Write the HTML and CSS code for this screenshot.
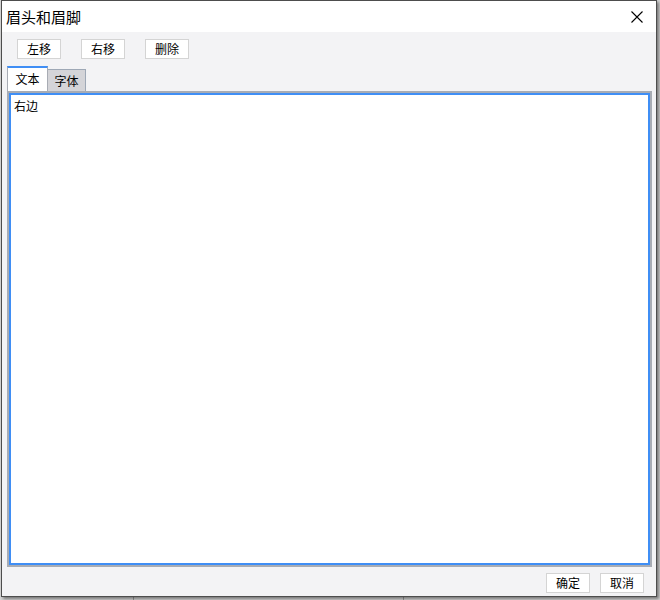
FILE: index.html
```html
<!DOCTYPE html>
<html lang="zh-CN">

<head>
    <meta charset="UTF-8">
    <meta name="viewport" content="width=device-width, initial-scale=1.0">
    <title>眉头和眉脚</title>
    <link rel="stylesheet" href="styles.css">
</head>

<body>
    <div class="dialog">
        <div class="title-bar">
            <span class="title">眉头和眉脚</span>
            <svg class="close" width="12" height="12" viewBox="0 0 12 12">
                <path d="M0.5 0.5 L11.5 11.5 M11.5 0.5 L0.5 11.5" stroke="#000" stroke-width="1.1" fill="none" />
            </svg>
        </div>
        <div class="toolbar">
            <button class="btn">左移</button>
            <button class="btn">右移</button>
            <button class="btn">删除</button>
        </div>
        <div class="tabs">
            <div class="tab active">文本</div>
            <div class="tab">字体</div>
        </div>
        <div class="panel">
            <div class="editor">右边</div>
        </div>
        <div class="footer">
            <button class="btn">确定</button>
            <button class="btn">取消</button>
        </div>
    </div>
</body>

</html>
```

FILE: styles.css
```css
* {
    margin: 0;
    padding: 0;
    box-sizing: border-box;
}

body {
    font-family: "Noto Sans CJK SC", "Noto Sans", sans-serif;
    font-size: 12px;
    color: #000;
    background-color: #d6d6d6;
    background-image:
        linear-gradient(90deg, transparent 133px, #9a9a9a 133px, #9a9a9a 134px, transparent 134px),
        linear-gradient(90deg, transparent 403px, #9a9a9a 403px, #9a9a9a 404px, transparent 404px);
    height: 600px;
    overflow: hidden;
}

.dialog {
    width: 656px;
    height: 597px;
    margin: 0 3px 3px 1px;
    display: flex;
    flex-direction: column;
    background-color: #f3f3f5;
    border: 1px solid #4d4d4d;
    border-top: none;
    box-shadow: 2px 2px 3px rgba(0, 0, 0, 0.45);
}

.title-bar {
    height: 32px;
    display: flex;
    align-items: center;
    justify-content: space-between;
    padding: 0 13px 0 4px;
    background-color: #fff;
    border-top: 1px solid #4d4d4d;
}

.title {
    font-size: 15px;
    line-height: 20px;
    margin-top: 1px;
}

.close {
    display: block;
}

.toolbar {
    display: flex;
    gap: 20px;
    padding: 7px 0 0 15px;
}

.btn {
    width: 44px;
    height: 20px;
    font-family: inherit;
    font-size: 12px;
    line-height: 18px;
    background-color: #fff;
    border: 1px solid #d4d4d4;
    color: #000;
}

.tabs {
    display: flex;
    align-items: flex-end;
    margin-top: 7px;
    padding-left: 5px;
    height: 25px;
}

.tab {
    width: 38px;
    height: 22px;
    line-height: 21px;
    text-align: center;
    font-size: 12px;
    background-color: #d4d4d8;
    border: 1px solid #9ea8b6;
    border-bottom: none;
    border-left: none;
}

.tab.active {
    width: 41px;
    height: 25px;
    line-height: 22px;
    background-color: #fff;
    border: 1px solid #a8acb4;
    border-top: 2px solid #3f8ef5;
    border-bottom: none;
}

.panel {
    flex: 1;
    margin: 0 4px 0 5px;
    border: 2px solid #a8acb4;
    display: flex;
}

.editor {
    flex: 1;
    background-color: #fff;
    border: 2px solid #3f8ef5;
    padding: 3px 3px;
    font-size: 12px;
    line-height: 16px;
}

.footer {
    display: flex;
    justify-content: flex-end;
    gap: 10px;
    padding: 6px 12px 3px 0;
}
```
